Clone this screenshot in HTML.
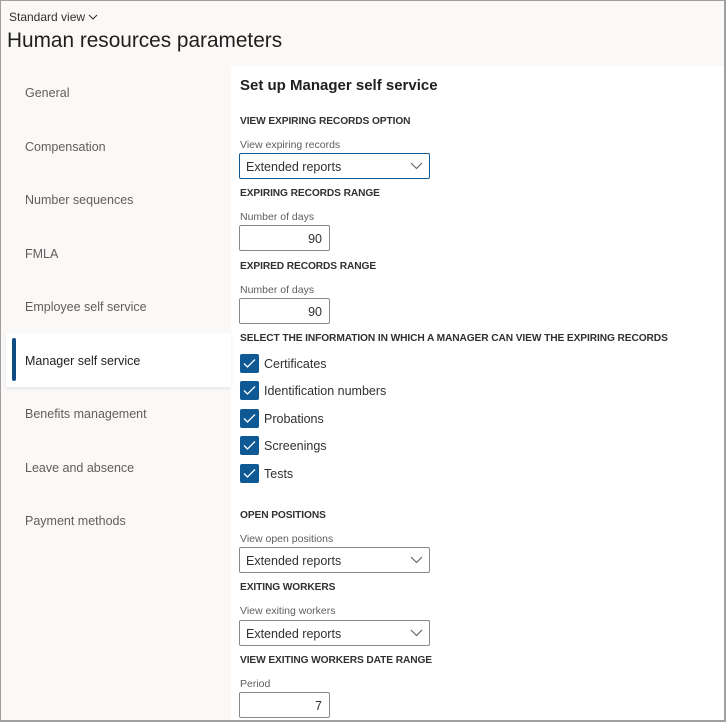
<!DOCTYPE html>
<html><head><style>
*{margin:0;padding:0;box-sizing:border-box}
body{width:726px;height:722px;overflow:hidden;background:#faf9f8;font-family:"Liberation Sans",sans-serif;position:relative}
.frame{position:absolute;left:0;top:0;width:726px;height:722px;border:1px solid #a19f9d;border-right:2px solid #a19f9d;border-bottom:2px solid #a19f9d;pointer-events:none;z-index:10}
.a{position:absolute;white-space:nowrap}
.nav{left:25px;font-size:12.5px;color:#605e5c}
.panel{position:absolute;left:231px;top:66px;width:493px;height:654px;background:#fff}
.sel{position:absolute;left:6px;top:333px;width:225px;height:54px;background:#fff;box-shadow:0 2px 3px rgba(0,0,0,.08)}
.bar{position:absolute;left:12px;top:338px;width:4px;height:43px;background:#0f4c81;border-radius:2px}
.h{left:240px;font-size:10.2px;font-weight:bold;color:#323130;letter-spacing:-0.1px}
.l{left:240px;font-size:10.5px;color:#605e5c}
.dd{position:absolute;left:239px;width:191px;height:26px;border:1px solid #8a8886;border-radius:2px;font-size:12.5px;color:#323130;padding:6px 0 0 6px}
.dd svg{position:absolute;right:6px;top:8px}
.num{position:absolute;left:239px;width:91px;height:26px;border:1px solid #8a8886;border-radius:2px;font-size:12.5px;color:#323130;text-align:right;padding:6px 7px 0 0}
.cb{position:absolute;left:240px;width:19px;height:19px;background:#0f5a94;border-radius:2px}
.cb svg{position:absolute;left:3px;top:4px}
.ct{left:264px;font-size:12.5px;color:#323130}
</style></head><body>
<div class="frame"></div>
<div class="a" style="left:9px;top:10px;font-size:12px;color:#323130">Standard view <svg width="10" height="7" viewBox="0 0 10 7"><path d="M1 1l4 4 4-4" fill="none" stroke="#323130" stroke-width="1.1"/></svg></div>
<div class="a" style="left:7px;top:29px;font-size:20.8px;color:#201f1e">Human resources parameters</div>
<div class="panel"></div>
<div class="sel"></div><div class="bar"></div>
<div class="a nav" style="top:86px">General</div>
<div class="a nav" style="top:140px">Compensation</div>
<div class="a nav" style="top:193px">Number sequences</div>
<div class="a nav" style="top:247px">FMLA</div>
<div class="a nav" style="top:300px">Employee self service</div>
<div class="a nav" style="top:354px;color:#201f1e">Manager self service</div>
<div class="a nav" style="top:407px">Benefits management</div>
<div class="a nav" style="top:461px">Leave and absence</div>
<div class="a nav" style="top:514px">Payment methods</div>

<div class="a" style="left:240px;top:77px;font-size:15px;color:#201f1e;font-weight:600">Set up Manager self service</div>
<div class="a h" style="top:116px">VIEW EXPIRING RECORDS OPTION</div>
<div class="a l" style="top:139px">View expiring records</div>
<div class="dd" style="top:153px;border-color:#0f5a94">Extended reports<svg width="13" height="8" viewBox="0 0 13 8"><path d="M1 1l5.5 5.5L12 1" fill="none" stroke="#605e5c" stroke-width="1.1"/></svg></div>
<div class="a h" style="top:188px">EXPIRING RECORDS RANGE</div>
<div class="a l" style="top:211px">Number of days</div>
<div class="num" style="top:225px">90</div>
<div class="a h" style="top:261px">EXPIRED RECORDS RANGE</div>
<div class="a l" style="top:284px">Number of days</div>
<div class="num" style="top:298px">90</div>
<div class="a h" style="top:333px">SELECT THE INFORMATION IN WHICH A MANAGER CAN VIEW THE EXPIRING RECORDS</div>
<div class="cb" style="top:354px"><svg width="13" height="11" viewBox="0 0 13 11"><path d="M1 5.5l3.5 3.5L12 1.5" fill="none" stroke="#fff" stroke-width="1.3"/></svg></div><div class="a ct" style="top:357px">Certificates</div>
<div class="cb" style="top:381px"><svg width="13" height="11" viewBox="0 0 13 11"><path d="M1 5.5l3.5 3.5L12 1.5" fill="none" stroke="#fff" stroke-width="1.3"/></svg></div><div class="a ct" style="top:384px">Identification numbers</div>
<div class="cb" style="top:409px"><svg width="13" height="11" viewBox="0 0 13 11"><path d="M1 5.5l3.5 3.5L12 1.5" fill="none" stroke="#fff" stroke-width="1.3"/></svg></div><div class="a ct" style="top:412px">Probations</div>
<div class="cb" style="top:436px"><svg width="13" height="11" viewBox="0 0 13 11"><path d="M1 5.5l3.5 3.5L12 1.5" fill="none" stroke="#fff" stroke-width="1.3"/></svg></div><div class="a ct" style="top:439px">Screenings</div>
<div class="cb" style="top:464px"><svg width="13" height="11" viewBox="0 0 13 11"><path d="M1 5.5l3.5 3.5L12 1.5" fill="none" stroke="#fff" stroke-width="1.3"/></svg></div><div class="a ct" style="top:467px">Tests</div>
<div class="a h" style="top:510px">OPEN POSITIONS</div>
<div class="a l" style="top:533px">View open positions</div>
<div class="dd" style="top:547px">Extended reports<svg width="13" height="8" viewBox="0 0 13 8"><path d="M1 1l5.5 5.5L12 1" fill="none" stroke="#605e5c" stroke-width="1.1"/></svg></div>
<div class="a h" style="top:582px">EXITING WORKERS</div>
<div class="a l" style="top:605px">View exiting workers</div>
<div class="dd" style="top:620px">Extended reports<svg width="13" height="8" viewBox="0 0 13 8"><path d="M1 1l5.5 5.5L12 1" fill="none" stroke="#605e5c" stroke-width="1.1"/></svg></div>
<div class="a h" style="top:655px">VIEW EXITING WORKERS DATE RANGE</div>
<div class="a l" style="top:678px">Period</div>
<div class="num" style="top:692px">7</div>
</body></html>
